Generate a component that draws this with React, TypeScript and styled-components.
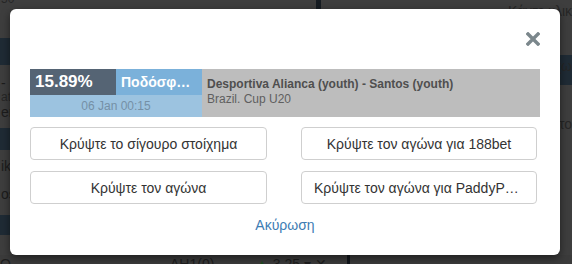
import styled, { createGlobalStyle } from "styled-components";

const GlobalStyle = createGlobalStyle`
  html, body {
    margin: 0;
    padding: 0;
    background: #3d3d3d;
    font-family: "Liberation Sans", Arial, sans-serif;
  }
  * { box-sizing: border-box; }
`;

const Screen = styled.div`
  position: relative;
  width: 572px;
  height: 264px;
  overflow: hidden;
  background: #3e3e3e;
`;

/* dimmed page behind the modal */
const Page = styled.div`
  display: flex;
  flex-direction: column;
  height: 100%;
`;

const PageTop = styled.div`
  display: flex;
  height: 255px;
`;

const LeftCol = styled.div`
  width: 316px;
  display: flex;
  flex-direction: column;
`;

const Divider = styled.div`
  width: 5px;
  background: #161c22;
`;

const RightCol = styled.div`
  flex: 1;
  display: flex;
  flex-direction: column;
`;

const Band = styled.div<{ $h: number; $dark?: boolean }>`
  height: ${(p) => p.$h}px;
  flex-shrink: 0;
  background: ${(p) => (p.$dark ? "#1f2b35" : "#3e3e3e")};
  color: #1c1c1c;
  font-size: 14px;
  line-height: 16px;
  padding: 2px 0 0 1px;
  white-space: nowrap;
  overflow: hidden;
`;

const BandRight = styled(Band)`
  text-align: right;
  padding: 3px 0 0 0;
  color: #262626;
`;

const SmallNote = styled.div`
  font-size: 12px;
  line-height: 13px;
  color: #262626;
`;

const PageBottom = styled.div`
  display: flex;
  align-items: flex-start;
  height: 9px;
  background: #3b3b3b;
  color: #1e1e1e;
  font-size: 14px;
  line-height: 16px;
  overflow: hidden;
`;

const BottomCell = styled.div<{ $w: number }>`
  width: ${(p) => p.$w}px;
  padding-top: 1px;
  white-space: nowrap;
`;

const Up = styled.span`
  color: #1f4a1f;
`;

const BottomDivider = styled.div`
  width: 3px;
  height: 9px;
  background: #10151a;
`;

/* modal */
const Modal = styled.div`
  position: absolute;
  left: 10px;
  top: 9px;
  width: 550px;
  height: 246px;
  background: #fff;
  border-radius: 6px;
  box-shadow: 0 3px 9px rgba(0, 0, 0, 0.5);
  padding: 23px 20px 0 20px;
  display: flex;
  flex-direction: column;
`;

const Header = styled.div`
  display: flex;
  justify-content: flex-end;
  height: 37px;
`;

const CloseButton = styled.button`
  border: 0;
  background: none;
  padding: 0;
  width: 14px;
  height: 14px;
  cursor: pointer;
  display: flex;
`;

const Card = styled.div`
  display: grid;
  grid-template-columns: 86px 86px 1fr;
  grid-template-rows: 26px 22px;
  width: 510px;
`;

const Percent = styled.div`
  background: #556474;
  color: #fff;
  font-weight: bold;
  font-size: 17px;
  line-height: 26px;
  padding-left: 5px;
`;

const Sport = styled.div`
  background: #7bb1da;
  color: #fff;
  font-weight: bold;
  font-size: 14px;
  line-height: 26px;
  padding: 0 6px 0 5px;
  white-space: nowrap;
  overflow: hidden;
  text-overflow: ellipsis;
`;

const Date = styled.div`
  grid-column: 1 / 3;
  background: #9cc3e0;
  color: #7590a6;
  font-size: 12px;
  line-height: 22px;
  text-align: center;
`;

const Match = styled.div`
  grid-column: 3;
  grid-row: 1 / 3;
  background: #bdbdbd;
  padding: 8px 5px 0 5px;
  font-size: 12px;
  line-height: 15px;
`;

const Teams = styled.div`
  font-weight: bold;
  color: #4f4f4f;
`;

const League = styled.div`
  color: #5f5f5f;
`;

const Actions = styled.div`
  display: grid;
  grid-template-columns: 237px 236px;
  grid-auto-rows: 33px;
  column-gap: 34px;
  row-gap: 11px;
  margin-top: 10px;
`;

const ActionButton = styled.button`
  font-family: "Liberation Sans", Arial, sans-serif;
  font-size: 14px;
  color: #333;
  background: #fff;
  border: 1px solid #cfcfcf;
  border-radius: 4px;
  padding: 0 12px;
  white-space: nowrap;
  overflow: hidden;
  text-overflow: ellipsis;
  cursor: pointer;
`;

const Cancel = styled.a`
  align-self: center;
  margin-top: 13px;
  font-size: 14px;
  line-height: 16px;
  color: #3d7cb3;
  text-decoration: none;
  cursor: pointer;
`;

const CloseIcon = () => (
  <svg width="14" height="14" viewBox="0 0 14 14">
    <path
      d="M2 2 L12 12 M12 2 L2 12"
      stroke="#7b878c"
      strokeWidth="3.4"
      strokeLinecap="square"
    />
  </svg>
);

const actions = [
  "Κρύψτε το σίγουρο στοίχημα",
  "Κρύψτε τον αγώνα για 188bet",
  "Κρύψτε τον αγώνα",
  "Κρύψτε τον αγώνα για PaddyPower",
];

export default function App() {
  return (
    <>
      <GlobalStyle />
      <Screen>
        <Page>
          <PageTop>
            <LeftCol>
              <Band $h={38}>
                <SmallNote style={{ marginTop: -9 }}>50</SmallNote>
              </Band>
              <Band $h={27} $dark />
              <Band $h={63}>
                <div style={{ marginTop: 8 }}>- (</div>
                <SmallNote>ati</SmallNote>
                <div>er</div>
              </Band>
              <Band $h={22} $dark />
              <Band $h={65}>
                <div style={{ marginTop: 6 }}>ik</div>
                <div style={{ marginTop: 12 }}>os</div>
              </Band>
              <Band $h={20} $dark />
              <Band $h={20} />
            </LeftCol>
            <Divider />
            <RightCol>
              <BandRight $h={55}>Κάντε κλικ</BandRight>
              <BandRight $h={30} $dark>χω</BandRight>
              <BandRight $h={170}>
                <div style={{ marginTop: 28 }}>το</div>
              </BandRight>
            </RightCol>
          </PageTop>
          <PageBottom>
            <BottomCell $w={170}>Ο</BottomCell>
            <BottomCell $w={85}>AH1(0)</BottomCell>
            <BottomCell $w={92}>
              <Up>▲</Up> 3.25 ▾ ✕
            </BottomCell>
            <BottomDivider />
          </PageBottom>
        </Page>

        <Modal>
          <Header>
            <CloseButton aria-label="close">
              <CloseIcon />
            </CloseButton>
          </Header>
          <Card>
            <Percent>15.89%</Percent>
            <Sport>Ποδόσφαιρο</Sport>
            <Match>
              <Teams>Desportiva Alianca (youth) - Santos (youth)</Teams>
              <League>Brazil. Cup U20</League>
            </Match>
            <Date>06 Jan 00:15</Date>
          </Card>
          <Actions>
            {actions.map((a) => (
              <ActionButton key={a}>{a}</ActionButton>
            ))}
          </Actions>
          <Cancel>Ακύρωση</Cancel>
        </Modal>
      </Screen>
    </>
  );
}
